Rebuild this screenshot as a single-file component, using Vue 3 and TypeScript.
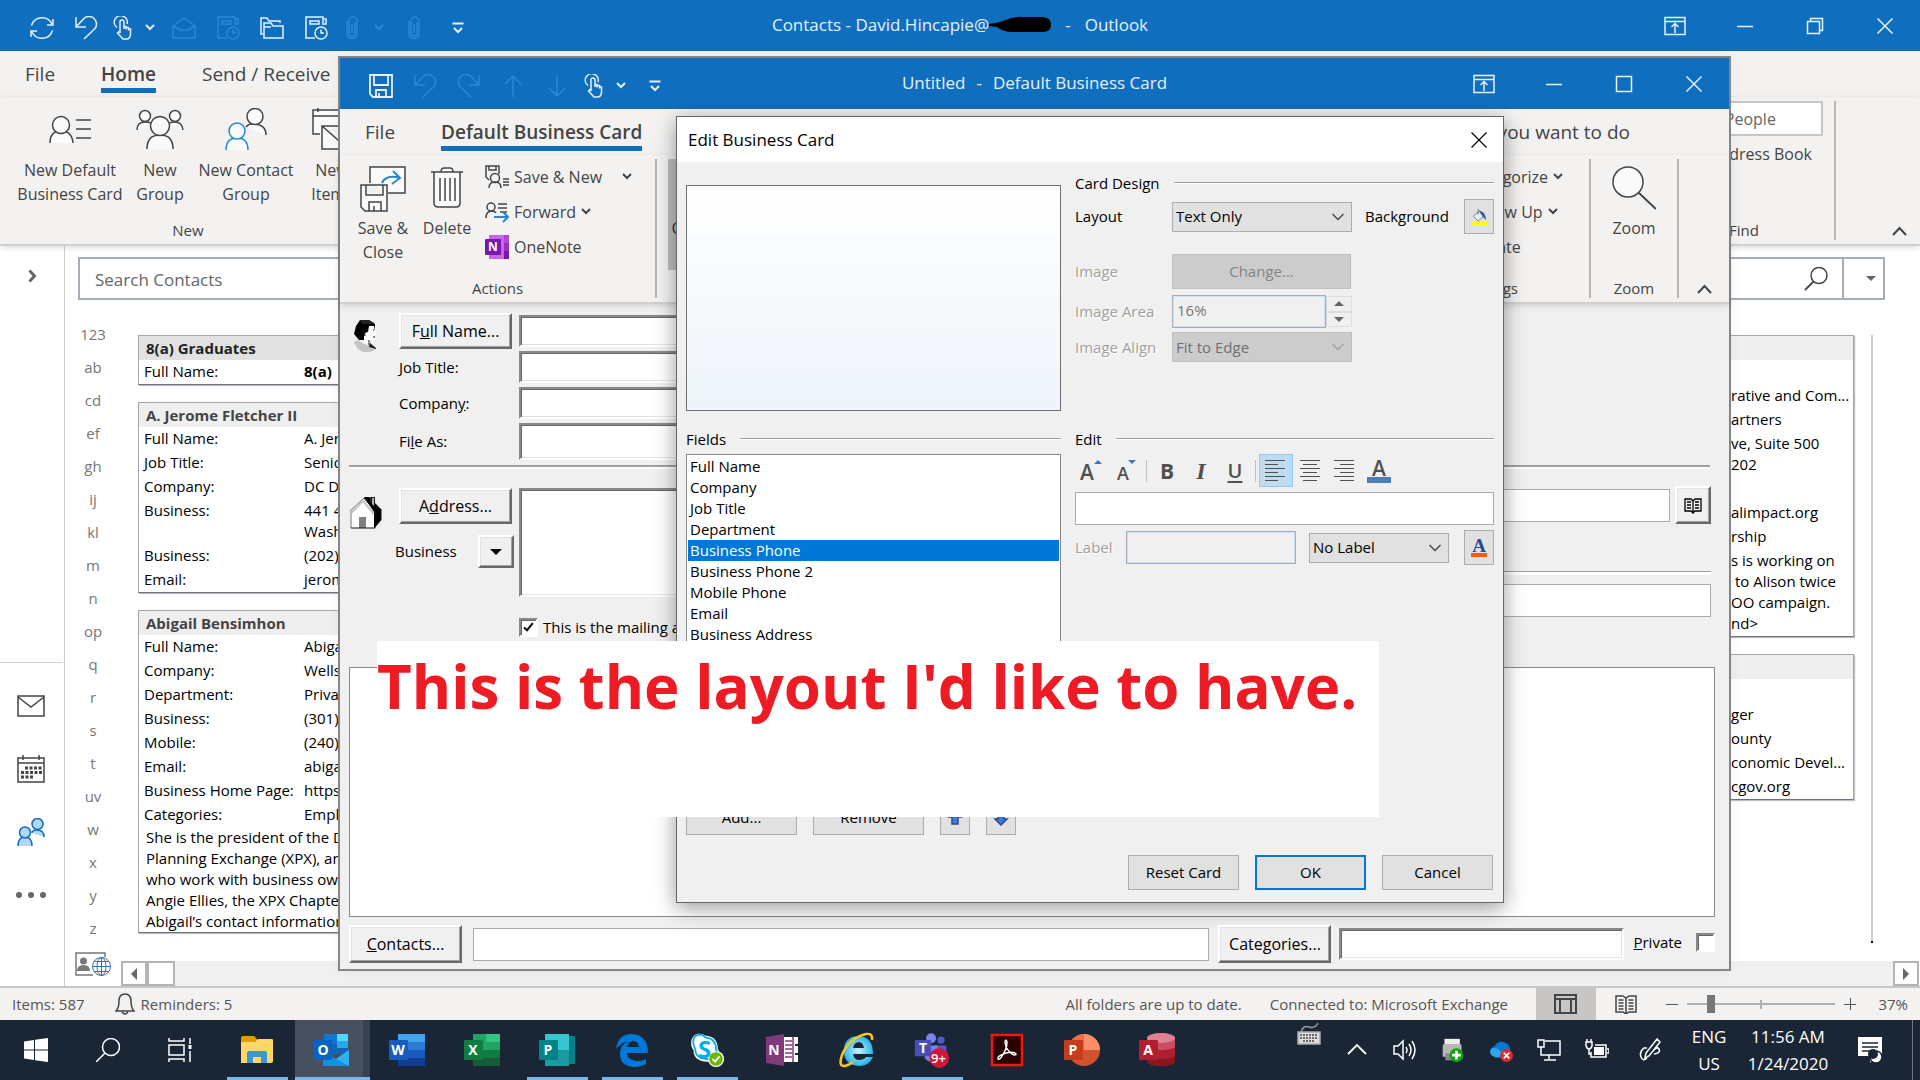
<script setup lang="ts">
import { ref } from 'vue'

interface BarItem { icon: string; label: string; width: number; dim?: boolean }
interface CardRow { label: string; value: string[]; strong?: boolean }
interface Card { name: string; dark?: boolean; rows: CardRow[]; notes?: string[] }
interface TaskApp { icon: string; label: string; letter?: string; badge?: string; open?: boolean; active?: boolean }

const mainQuick: BarItem[] = [
  { icon: 'sync', label: 'Send/Receive All Folders', width: 44 },
  { icon: 'undo', label: 'Undo', width: 44 },
  { icon: 'touch', label: 'Touch mode', width: 30 },
  { icon: 'chev', label: 'Touch options', width: 24 },
  { icon: 'envelope', label: 'Mark read', width: 44, dim: true },
  { icon: 'journal', label: 'Schedule', width: 44, dim: true },
  { icon: 'folders', label: 'Move', width: 44 },
  { icon: 'journal', label: 'Journal', width: 44 },
  { icon: 'clip', label: 'Attach', width: 28, dim: true },
  { icon: 'chev', label: 'Attach options', width: 26, dim: true },
  { icon: 'clip', label: 'Attach file', width: 44, dim: true },
  { icon: 'customize', label: 'Customize toolbar', width: 44 },
]
const cardQuick: BarItem[] = [
  { icon: 'floppy', label: 'Save', width: 44 },
  { icon: 'undo', label: 'Undo', width: 44, dim: true },
  { icon: 'redo', label: 'Redo', width: 44, dim: true },
  { icon: 'up', label: 'Previous item', width: 44, dim: true },
  { icon: 'down', label: 'Next item', width: 44, dim: true },
  { icon: 'touch', label: 'Touch mode', width: 30 },
  { icon: 'chev', label: 'Touch options', width: 24 },
  { icon: 'customize', label: 'Customize toolbar', width: 44 },
]
const mainControls = ['display', 'minimize', 'restore', 'close']
const cardControls = ['display', 'minimize', 'maximize', 'close']

const letters = ['123', 'ab', 'cd', 'ef', 'gh', 'ij', 'kl', 'm', 'n', 'op', 'q', 'r', 's', 't', 'uv', 'w', 'x', 'y', 'z']

const leftCards: Card[] = [
  { name: '8(a) Graduates', dark: true, rows: [{ label: 'Full Name:', value: ['8(a)'], strong: true }] },
  {
    name: 'A. Jerome Fletcher II',
    rows: [
      { label: 'Full Name:', value: ['A. Jer'] },
      { label: 'Job Title:', value: ['Senior'] },
      { label: 'Company:', value: ['DC De'] },
      { label: 'Business:', value: ['441 4', 'Wash'] },
      { label: 'Business:', value: ['(202)'] },
      { label: 'Email:', value: ['jerom'] },
    ],
  },
  {
    name: 'Abigail Bensimhon',
    rows: [
      { label: 'Full Name:', value: ['Abiga'] },
      { label: 'Company:', value: ['Wells'] },
      { label: 'Department:', value: ['Privat'] },
      { label: 'Business:', value: ['(301)'] },
      { label: 'Mobile:', value: ['(240)'] },
      { label: 'Email:', value: ['abiga'] },
      { label: 'Business Home Page:', value: ['https'] },
      { label: 'Categories:', value: ['Empl'] },
    ],
    notes: [
      'She is the president of the D',
      'Planning Exchange (XPX), an',
      'who work with business own',
      'Angie Ellies, the XPX Chapte',
      'Abigail’s contact information',
    ],
  },
]
const rightCards: Card[] = [
  {
    name: '',
    rows: [
      { label: '', value: [''] },
      { label: '', value: ['rative and Com...'] },
      { label: '', value: ['artners'] },
      { label: '', value: ['ve, Suite 500', '202'] },
      { label: '', value: [''] },
      { label: '', value: ['alimpact.org'] },
      { label: '', value: ['rship'] },
      { label: '', value: ['s is working on', ' to Alison twice', 'OO campaign.', 'nd>'] },
    ],
  },
  {
    name: '',
    rows: [
      { label: '', value: [''] },
      { label: '', value: ['ger'] },
      { label: '', value: ['ounty'] },
      { label: '', value: ['conomic Devel...'] },
      { label: '', value: ['cgov.org'] },
    ],
  },
]

const fields = ['Full Name', 'Company', 'Job Title', 'Department', 'Business Phone', 'Business Phone 2', 'Mobile Phone', 'Email', 'Business Address']
const selectedField = ref('Business Phone')
const zoomLevel = ref(14)
const mailing = ref(true)
const area = ref('16%')

const apps: TaskApp[] = [
  { icon: 'explorer', label: 'File Explorer', open: true },
  { icon: 'outlook', label: 'Outlook', letter: 'O', active: true },
  { icon: 'word', label: 'Word', letter: 'W' },
  { icon: 'excel', label: 'Excel', letter: 'X' },
  { icon: 'publisher', label: 'Publisher', letter: 'P', open: true },
  { icon: 'edge', label: 'Edge', open: true },
  { icon: 'skype', label: 'Skype', letter: 'S', open: true },
  { icon: 'onenote16', label: 'OneNote 2016', letter: 'N' },
  { icon: 'ie', label: 'Internet Explorer' },
  { icon: 'teams', label: 'Teams', letter: 'T', badge: '9+', open: true },
  { icon: 'acrobat', label: 'Acrobat' },
  { icon: 'powerpoint', label: 'PowerPoint', letter: 'P' },
  { icon: 'access', label: 'Access', letter: 'A' },
]
const tray = ['caret', 'volume', 'printer', 'onedrive', 'network', 'battery']
</script>

<template>
  <div class="desktop">
    <svg class="sprite" aria-hidden="true">
      <defs>
        <pattern id="dither" width="2" height="2" patternUnits="userSpaceOnUse">
          <rect width="2" height="2" fill="#222" /><rect width="1" height="1" fill="#b0b0b0" />
        </pattern>
        <radialGradient id="ie-fill"><stop offset="0" stop-color="#c8f4ff" /><stop offset="1" stop-color="#2db4ea" /></radialGradient>
      </defs>
      <symbol id="sync" viewBox="0 0 24 24"><path d="M1.500 9.500A11 11 0 0 1 22 8M23 3v6h-6M22.500 14.500A11 11 0 0 1 2 16M1 21v-6h6" /></symbol>
      <symbol id="undo" viewBox="0 0 24 24"><path d="M2 1v10h10M2 11L9 3.500a7.500 7.500 0 0 1 12 9L10 23" /></symbol>
      <symbol id="redo" viewBox="0 0 24 24"><path d="M22 1v10H12M22 11L15 3.500a7.500 7.500 0 0 0-12 9L14 23" /></symbol>
      <symbol id="touch" viewBox="0 0 24 24"><path d="M6 11.500A6.500 6.500 0 1 1 16 8M9 16V6a2 2 0 0 1 4 0v7M13 10.500h2v3M15.500 11.500h2v3M18 13h1.500v6q-1 4-3.500 4h-4L6.500 17l1.500-1.500 1.500 1.500" /></symbol>
      <symbol id="chev" viewBox="0 0 24 24"><path d="M8 9l4 4 4-4" stroke-width="2" /></symbol>
      <symbol id="chev-wide" viewBox="0 0 24 24"><path d="M6.500 9l5.500 5.500L17.500 9" stroke-width="1.300" /></symbol>
      <symbol id="envelope" viewBox="0 0 24 24"><path d="M1 10L12 2l11 8v12H1zM1 10l7 4h8l7-4" /></symbol>
      <symbol id="journal" viewBox="0 0 24 24"><path d="M11 22H2V1h17v8M6 5h9v3H6zM20 3h2v5h-2" /><circle cx="17" cy="17" r="6" /><path d="M17 13.500V17h3" /></symbol>
      <symbol id="folders" viewBox="0 0 24 24"><path d="M3 18H1V2h6l2 3h11v2M4 22V7h7l2 3h10v12zM4 11h7" /></symbol>
      <symbol id="clip" viewBox="0 0 24 24"><path d="M15 6v11a3 3 0 0 1-6 0V5a4 4 0 0 1 8 0v13M12 8v9M7 5v12a5 5 0 0 0 10 1V8" /></symbol>
      <symbol id="customize" viewBox="0 0 24 24"><path d="M6.500 7.500h11M8 12l4 4 4-4" stroke-width="2" /></symbol>
      <symbol id="floppy" viewBox="0 0 24 24"><path d="M1 1h22v22H4l-3-3zM5 1v10h14V1M7 23v-7h10v7M10 19v4" stroke-width="1.800" /></symbol>
      <symbol id="up" viewBox="0 0 24 24"><path d="M12 23V2M4 10l8-8 8 8" /></symbol>
      <symbol id="down" viewBox="0 0 24 24"><path d="M12 1v21M4 14l8 8 8-8" /></symbol>
      <symbol id="display" viewBox="0 0 24 24"><path d="M2 3.500h20v17H2zM2 7.500h20M12 19v-9M8.500 13L12 9.500l3.500 3.500" /></symbol>
      <symbol id="minimize" viewBox="0 0 24 24"><path d="M4 12.500h16" /></symbol>
      <symbol id="maximize" viewBox="0 0 24 24"><path d="M4.500 4.500h15v15h-15z" /></symbol>
      <symbol id="restore" viewBox="0 0 24 24"><path d="M4.500 7.500h12v12h-12zM7.500 7V4.500h12v12H17" /></symbol>
      <symbol id="close" viewBox="0 0 24 24"><path d="M4.500 4.500l15 15M19.500 4.500l-15 15" /></symbol>

      <symbol id="newcard" viewBox="0 0 44 44"><g fill="#fafafa"><path d="M2 35q0-12 11-12t12 12" /><circle cx="13" cy="17" r="8.500" /></g><path d="M28 12h15M28 21h15M28 30h15" /></symbol>
      <symbol id="newgroup" viewBox="0 0 48 44"><g fill="#fafafa"><path d="M1 22q0-8 8-8t8 5M31 19q1-5 8-5t8 8" /><circle cx="9" cy="8" r="5.500" /><circle cx="39" cy="8" r="5.500" /><path d="M11 41q0-14 13-14t13 14" /><circle cx="24" cy="18" r="9.500" /></g></symbol>
      <symbol id="newcontact" viewBox="0 0 44 44"><g fill="#fafafa"><path d="M22 19q3-4 9-3 11 1 11 11" /><circle cx="31" cy="8.500" r="8" /><g stroke="#2488d0"><path d="M2 42q0-12 11-12t11 12" /><circle cx="13" cy="23" r="8" /></g></g></symbol>
      <symbol id="newitems" viewBox="0 0 44 44"><path d="M10 26H3V2h36v10M3 8h36M8 0v4M30 0v4M12 18h31v23H12zM12 18l16 14 15-14" fill="#fafafa" /></symbol>
      <symbol id="saveclose" viewBox="0 0 46 46"><path d="M10 17V1h35v26H28" fill="#fafafa" /><path d="M22 17q4-9 18-5M33 5l7 7-8 6" stroke="#2488d0" stroke-width="2" /><path d="M1 19h26v26H5l-4-4zM6 19v10h17V19M9 45v-9h12v9M14 40v5" fill="#fafafa" /></symbol>
      <symbol id="trash" viewBox="0 0 44 44"><path d="M6 6h32M16 6q0-4 3-4h6q3 0 3 4M9 6v31q0 4 4 4h18q4 0 4-4V6" fill="#fafafa" /><path d="M15 12v23M20 12v23M25 12v23M30 12v23" /></symbol>
      <symbol id="savenew" viewBox="0 0 24 24"><path d="M4 15L1 12V1h13v8M4 1v4h7V1M4 23q0-6 6-6t6 6M18 14h6M18 17h6M18 20h6" /><circle cx="10" cy="13" r="4.500" /></symbol>
      <symbol id="forward" viewBox="0 0 24 24"><path d="M1 18q0-7 6-7 3 0 4 2M13 4h9M13 8h9M15 12h7" /><circle cx="6" cy="7" r="4" /><path d="M9 17h14M18 12l5 5-5 5" stroke="#2488d0" stroke-width="2" /></symbol>
      <symbol id="onenote" viewBox="0 0 24 24"><g stroke="none"><path d="M4 0h15v24H4z" fill="#ca64ea" /><path d="M19 0h5v8h-5z" fill="#ae4bd5" /><path d="M19 8h5v8h-5z" fill="#9332bf" /><path d="M19 16h5v8h-5z" fill="#7719aa" /><rect y="4" width="16" height="16" rx="1" fill="#7719aa" /></g></symbol>
      <symbol id="magnifier" viewBox="0 0 44 44"><circle cx="16" cy="16" r="15" fill="#fafafa" /><path d="M27 27l17 16" stroke-width="2" /></symbol>
      <symbol id="collapse" viewBox="0 0 24 24"><path d="M6 19l6.500-7 6.500 7" stroke-width="2" /></symbol>
      <symbol id="find" viewBox="0 0 24 24"><circle cx="15" cy="8.500" r="8" /><path d="M9.500 14.500L1 23" stroke-width="1.800" /></symbol>
      <symbol id="expand" viewBox="0 0 24 24"><path d="M9.500 6.500l5 5.500-5 5.500" stroke-width="3" /></symbol>

      <symbol id="nav-mail" viewBox="0 0 28 28"><path d="M1 4h26v20H1zM1 5l13 10L27 5" /></symbol>
      <symbol id="nav-calendar" viewBox="0 0 28 28"><path d="M1 3h26v24H1zM1 8h26M6 0v5M22 0v5" /><path d="M8 13h17M4 17.500h21M4 22h13" stroke-width="3" stroke-dasharray="3 1.500" /></symbol>
      <symbol id="nav-people" viewBox="0 0 28 28"><g stroke="#106ebe" fill="#b3d6f2"><path d="M15 15q0-3 5-3 7 0 7 7" /><circle cx="20.500" cy="6" r="5.500" /><path d="M1 28q0-9 7-9t7 9" /><circle cx="8" cy="14.500" r="5.500" /></g></symbol>
      <symbol id="globe-card" viewBox="0 0 36 24"><path d="M18 23H1V1h29v4" stroke="#777" /><circle cx="8.500" cy="9" r="3.500" fill="#777" stroke="none" /><path d="M2 19q0-6 6.500-6t6.500 6z" fill="#777" stroke="none" /><g stroke="#2f75b5" stroke-width="1"><circle cx="26.500" cy="14.500" r="9" fill="#fff" /><ellipse cx="26.500" cy="14.500" rx="4.500" ry="9" /><path d="M26.500 5v19M17.500 14.500h18M19 9.500h15M19 19.500h15" /></g></symbol>
      <symbol id="bell" viewBox="0 0 20 22"><path d="M1 18q3-3 3-10 0-7 6-7t6 7q0 7 3 10zM7 19q3 4 6 0" /></symbol>
      <symbol id="view-normal" viewBox="0 0 24 20"><path d="M1 1h21v18H1zM1 5h21M6 5v14M17 5v14" stroke-width="2" /></symbol>
      <symbol id="view-read" viewBox="0 0 24 20"><path d="M2 2h7l3 2 3-2h7v16h-7l-3 2-3-2H2zM12 4v15M4.500 6h5M4.500 9h5M4.500 12h5M4.500 15h5M14.500 6h5M14.500 9h5M14.500 12h5M14.500 15h5" /></symbol>

      <symbol id="woman" viewBox="0 0 24 34"><g stroke="none"><path d="M1 24l4-2 6 4 10 2 1 4-5 2h-7q-7-3-9-10z" fill="#c4c4c4" /><path d="M3 8l4-6h9l6 4v7l-6 9H6L1 16z" fill="url(#dither)" /><path d="M7 2h9l5 3-4 1H9z" fill="#222" /><path d="M11 26v-7l1-4 3-1 1-6h5l1 5 2 3-2 1v4l-1 2h-4v4z" fill="#fff" /><path d="M17 25l6 5v1l-7-2z" fill="#222" /></g><path d="M20 12h1M20 19h2M16 22v5M9 15q3-3 3 3" stroke="#111" stroke-width="1" /></symbol>
      <symbol id="house" viewBox="0 0 33 34"><g stroke="none"><path d="M15 2h5l12 12v11l-7 8V17z" fill="url(#dither)" /><path d="M21 2h5v9l-5-4z" fill="#222" /><path d="M23 3h2v8l-2-2z" fill="#aaa" /><path d="M2 17L14 5l11 13v15H2z" fill="#fff" /><rect x="10" y="22" width="7" height="11" fill="#808080" /></g><path d="M1 16L15 3M2 16v17" stroke="#777" stroke-width="1" /><path d="M2 18L14 6l11 13" stroke="#c4c4c4" stroke-width="2" /><path d="M15 3l11 13v17H2M26 32l6-7V14" stroke="#111" stroke-width="1" /></symbol>
      <symbol id="book" viewBox="0 0 20 20"><path d="M2 4h6l2 2 2-2h6v12h-6l-2 2-2-2H2zM10 6v12M4 7h4M4 10h4M4 13h4M12 7h4M12 10h4M12 13h4" stroke="#000" stroke-width="1.300" /></symbol>
      <symbol id="bucket" viewBox="0 0 20 20"><g stroke="none"><path d="M3 9l7-6 6 6-7 6z" fill="#e8f2fb" /><path d="M10 2q8 1 9 12l-5-5z" fill="#2b5ca8" /><rect x="0" y="15" width="20" height="5" fill="#ff0" /></g><path d="M3 9l7-6 6 6-7 6zM9 0v7" stroke="#567" stroke-width="1" /></symbol>
      <symbol id="arrow-up" viewBox="0 0 16 16"><path d="M8 1l6 6h-3v7H5V7H2z" fill="#4a78d8" stroke="#2848a0" /></symbol>
      <symbol id="arrow-down" viewBox="0 0 16 16"><path d="M8 15l6-6h-3V2H5v7H2z" fill="#4a78d8" stroke="#2848a0" /></symbol>
      <symbol id="al-left" viewBox="0 0 24 24"><path d="M1 1.500h20M1 5.500h13M1 9.500h20M1 13.500h13M1 17.500h20M1 21.500h13" stroke-width="1" /></symbol>
      <symbol id="al-center" viewBox="0 0 24 24"><path d="M2 1.500h20M5 5.500h14M2 9.500h20M5 13.500h14M2 17.500h20M5 21.500h14" stroke-width="1" /></symbol>
      <symbol id="al-right" viewBox="0 0 24 24"><path d="M2 1.500h20M8 5.500h14M2 9.500h20M8 13.500h14M2 17.500h20M8 21.500h14" stroke-width="1" /></symbol>

      <symbol id="windows" viewBox="0 0 24 24"><path d="M0 3.500l10-1.500v9.500H0zM11 1.800L24 0v11.500H11zM0 12.500h10V22L0 20.500zM11 12.500h13V24l-13-1.800z" fill="#fff" stroke="none" /></symbol>
      <symbol id="search" viewBox="0 0 24 24"><circle cx="15" cy="9" r="8.500" /><path d="M9 15L0 24" /></symbol>
      <symbol id="taskview" viewBox="0 0 24 24"><path d="M1 0v3h15V0M1 24v-3h15v3M1 7h15v10H1zM22 0v6M22 13v11" /><path d="M22 7v4" stroke-width="3" /></symbol>
      <symbol id="explorer" viewBox="0 0 36 36"><g stroke="none"><path d="M2 6q0-2 2-2h11l3 3v5H2z" fill="#e09c0c" /><path d="M2 10h14l3-3h14q1 0 1 1v21q0 2-2 2H2z" fill="#ffd766" /><path d="M8 31V21q0-2 2-2h16q2 0 2 2v10h-6v-6h-8v6z" fill="#3b97dc" /></g></symbol>
      <symbol id="outlook" viewBox="0 0 36 36"><g stroke="none"><path d="M10 2h24v20H10z" fill="#1066b5" /><path d="M10 2h13v10H10z" fill="#0f78d4" /><path d="M23 2h11v7H23z" fill="#50d9ff" /><path d="M23 9h11v7H23z" fill="#28a8ea" /><path d="M9 20l13 7 13-9v15q0 1-1 1H9z" fill="#1490df" /><path d="M35 18v16L22 27z" fill="#32b0f0" /><rect x="0" y="8" width="18" height="20" rx="1" fill="#0a63c2" /></g></symbol>
      <symbol id="word" viewBox="0 0 36 36"><g stroke="none"><path d="M9 2h27v8H9z" fill="#41a5ee" /><path d="M9 10h27v8H9z" fill="#2b7cd3" /><path d="M9 18h27v8H9z" fill="#185abd" /><path d="M9 26h27v8H9z" fill="#103f91" /><rect y="8" width="19" height="20" rx="1" fill="#185abd" /></g></symbol>
      <symbol id="excel" viewBox="0 0 36 36"><g stroke="none"><path d="M9 2h27v32H9z" fill="#21a366" /><path d="M22 2h14v8H22z" fill="#33c481" /><path d="M9 18h27v8H9z" fill="#107c41" /><path d="M9 26h27v8H9z" fill="#185c37" /><rect y="8" width="19" height="20" rx="1" fill="#107c41" /></g></symbol>
      <symbol id="publisher" viewBox="0 0 36 36"><g stroke="none"><path d="M20 4h16v28H20z" fill="#038387" /><path d="M6 2h24v32H6z" fill="#37c6d0" /><path d="M6 18h24v16H6z" fill="#1a9ba1" /><rect y="8" width="19" height="20" rx="1" fill="#038387" /></g></symbol>
      <symbol id="edge" viewBox="0 0 36 36"><path d="M2 17Q4 2 18 2q16 1 16 19H13q1 8 11 8 5 0 8-2v5q-5 3-12 3Q5 34 6 20q1-8 9-11-7 1-13 8zM13 15h12q-1-6-6-6-5 1-6 6z" fill="#0078d7" stroke="none" fill-rule="evenodd" /></symbol>
      <symbol id="skype" viewBox="0 0 40 40"><g stroke="none"><path d="M11 2q5 0 7 2 14 1 14 15 3 4 1 9-4 7-12 5Q5 33 5 20 1 15 3 8q3-6 8-6z" fill="#fff" /><path d="M12 4q4 0 6 3 12 1 12 13 2 4 0 7-3 4-9 3Q7 30 7 19 4 14 5 9q3-5 7-5z" fill="#fff" /><circle cx="30" cy="30" r="9" fill="#fff" /><circle cx="30" cy="30" r="8" fill="#6bb700" /></g><path d="M12 3q4 0 6 3 12 1 12 13 2 4 0 8-4 4-9 3Q7 30 7 19 4 14 5 8q2-5 7-5z" stroke="#00aff0" stroke-width="2" /><circle cx="30" cy="30" r="8" fill="#6bb700" stroke="#fff" stroke-width="1" /><path d="M26 30l3 3 5-6" stroke="#fff" stroke-width="2" /></symbol>
      <symbol id="onenote16" viewBox="0 0 36 36"><g stroke="none"><path d="M18 5h13v25H18z" fill="#fff" /><path d="M31 5h3v7h-3zM31 14h3v7h-3zM31 23h3v7h-3z" fill="#fff" /><path d="M2 5L20 2v32L2 31z" fill="#80397b" /></g><path d="M21 9h7M21 13h7M21 17h7M21 21h7M21 25h7M29 5v25" stroke="#80397b" /></symbol>
      <symbol id="ie" viewBox="0 0 36 36"><path d="M5 21Q4 4 20 4q14 1 14 18H14q1 6 6 6 5 0 7-3h7q-4 9-14 9Q6 33 5 21zM14 16h11q-1-6-5-6-5 0-6 6z" fill="url(#ie-fill)" stroke="none" fill-rule="evenodd" /><path d="M33 8q1-7-6-6Q10 6 3 23q-4 12 3 11 4-1 8-4" stroke="#f4c620" stroke-width="2.500" /></symbol>
      <symbol id="teams" viewBox="0 0 40 40"><g stroke="none"><circle cx="19" cy="7" r="5.500" fill="#7b83eb" /><circle cx="30" cy="9" r="4" fill="#5059c9" /><path d="M23 15h13v12q-6 6-13 3z" fill="#5059c9" /><path d="M11 15h15v16q-8 6-14-2z" fill="#7b83eb" /><rect x="1" y="9" width="18" height="18" rx="1" fill="#464eb8" /><circle cx="28" cy="29" r="11" fill="#d0163b" /></g></symbol>
      <symbol id="acrobat" viewBox="0 0 36 36"><rect x="3" y="3" width="30" height="30" fill="#2a0000" stroke="#f5150a" stroke-width="2.500" /><path d="M9 27q-1-3 8-6 8-2 10 1 0 2-4 0-6-4-7-12 1-4 2 0 0 7-5 14-2 4-4 3z" stroke="#fff" /></symbol>
      <symbol id="powerpoint" viewBox="0 0 36 36"><g stroke="none"><circle cx="20" cy="18" r="16" fill="#d35230" /><path d="M20 2a16 16 0 0 1 16 16H20z" fill="#ff8f6b" /><path d="M20 2A16 16 0 0 0 4 18h16z" fill="#ed6c47" /><rect y="8" width="19" height="20" rx="1" fill="#c43e1c" /></g></symbol>
      <symbol id="access" viewBox="0 0 36 36"><g stroke="none"><path d="M8 6v24q3 4 14 4t14-4V6z" fill="#ae2031" /><path d="M8 6v9q3 3 14 3t14-3V6z" fill="#c94f60" /><path d="M8 24v6q3 4 14 4t14-4v-6q-3 3-14 3T8 24z" fill="#8a1522" /><ellipse cx="22" cy="6" rx="14" ry="5" fill="#e08095" /><rect y="8" width="19" height="20" rx="1" fill="#b01e30" /></g></symbol>

      <symbol id="keyboard" viewBox="0 0 24 24"><path d="M4 9q2-7 8-5t9-4" stroke="#999" /><rect x="1" y="9" width="22" height="12" fill="#ddd" stroke="#aaa" /><path d="M3 12h18M3 15h18M6 18h12" stroke="#444" stroke-dasharray="2 1" /></symbol>
      <symbol id="caret" viewBox="0 0 24 24"><path d="M3 16l9-9 9 9" stroke-width="1.800" /></symbol>
      <symbol id="volume" viewBox="0 0 24 24"><path d="M1 8h4l5-5v18l-5-5H1zM13 9q2 3 0 6M16 6q4 6 0 12M19 3q6 9 0 18" /></symbol>
      <symbol id="printer" viewBox="0 0 26 28"><g stroke="none"><rect x="3" y="1" width="18" height="10" fill="#eee" /><path d="M1 9q0-2 2-2h18q2 0 2 2v13H1z" fill="#b8b8b8" /><rect x="4" y="18" width="14" height="8" fill="#888" /><circle cx="17" cy="20" r="8" fill="#16a016" /></g><path d="M17 15v10M12 20h10" stroke="#fff" stroke-width="3" /></symbol>
      <symbol id="onedrive" viewBox="0 0 26 26"><g stroke="none"><path d="M4 18q-5-6 2-9 4-7 11-4 6 2 6 9-1 6-6 6H7z" fill="#0078d4" /><path d="M3 19q-3-3-1-7 5-3 9 1l8 8H7z" fill="#28a8ea" /><circle cx="19" cy="19" r="7" fill="#d92c2c" /></g><path d="M16 16l6 6M22 16l-6 6" stroke="#fff" stroke-width="1.800" /></symbol>
      <symbol id="network" viewBox="0 0 24 24"><path d="M8 3h15v14H4v-6M12 17v4M7 22h12M1 2h6v7H1zM4 9v3" /></symbol>
      <symbol id="battery" viewBox="0 0 24 24"><path d="M6 14v5h15V7H10M22 11h2v4h-2M1 4h6v4q-1 3-3 3T1 8zM2 1v3M6 1v3M4 11v5h2" /><rect x="9" y="9" width="10" height="8" fill="#fff" stroke="none" /></symbol>
      <symbol id="pen" viewBox="0 0 24 24"><path d="M18 1l3 3-11 14-4 2 1-5zM8 10H5q-5 4-3 9 2 5 6 1M14 13q4-5 6-2 2 4-5 5" /></symbol>
      <symbol id="action" viewBox="0 0 26 28"><path d="M1 1h24v19h-8l-4 7v-7H1z" fill="#fff" stroke="none" /><path d="M5 7h16M5 11h16M5 15h12" stroke="#1a2636" stroke-width="1.500" /><circle cx="19" cy="21" r="6" fill="#fff" stroke="#1a2636" /><circle cx="16" cy="18" r="5" fill="#1a2636" stroke="none" /></symbol>
    </svg>

    <section class="main-window" aria-label="Outlook contacts">
      <header class="titlebar">
        <div class="quick">
          <button v-for="(b, i) in mainQuick" :key="i" :aria-label="b.label" :class="{ dim: b.dim }" :style="{ width: b.width + 'px' }">
            <svg class="i24"><use :href="'#' + b.icon" /></svg>
          </button>
        </div>
        <h1 class="title">Contacts - David.Hincapie@<svg class="scribble" viewBox="0 0 62 17"><path d="M0 8Q8 7 14 5 24 0 34 1H54q8 1 8 7 0 8-8 8H24Q14 16 8 11L0 10z" fill="#000" stroke="none" /></svg><span>-</span><span>Outlook</span></h1>
        <div class="controls">
          <button v-for="c in mainControls" :key="c" :aria-label="c"><svg class="i24"><use :href="'#' + c" /></svg></button>
        </div>
      </header>
      <nav class="tabs">
        <button>File</button><button class="on">Home</button><button>Send / Receive</button>
      </nav>
      <div class="ribbon">
        <div class="group new-group">
          <div class="tools">
            <button class="big w124"><svg class="i44"><use href="#newcard" /></svg>New Default<br />Business Card</button>
            <button class="big w56"><svg class="i44 wide"><use href="#newgroup" /></svg>New<br />Group</button>
            <button class="big w116"><svg class="i44"><use href="#newcontact" /></svg>New Contact<br />Group</button>
            <button class="big w56"><svg class="i44"><use href="#newitems" /></svg>New<br />Items</button>
          </div>
          <span class="caption">New</span>
        </div>
        <div class="group find-group">
          <div class="find-tools">
            <input class="people" aria-label="Search People" value="Search People" />
            <button>Address Book</button>
          </div>
          <span class="caption">Find</span>
        </div>
        <button class="fold" aria-label="Collapse ribbon"><svg class="i24"><use href="#collapse" /></svg></button>
      </div>

      <div class="workspace">
        <nav class="rail">
          <button class="expand" aria-label="Expand folder pane"><svg class="i24"><use href="#expand" /></svg></button>
          <div class="modules">
            <button aria-label="Mail"><svg class="i28"><use href="#nav-mail" /></svg></button>
            <button aria-label="Calendar"><svg class="i28"><use href="#nav-calendar" /></svg></button>
            <button aria-label="People"><svg class="i28"><use href="#nav-people" /></svg></button>
            <button aria-label="More"><i class="dot"></i><i class="dot"></i><i class="dot"></i></button>
          </div>
        </nav>
        <main class="people-view">
          <div class="search">
            <input aria-label="Search Contacts" placeholder="Search Contacts" />
            <button class="go" aria-label="Search"><svg class="i24"><use href="#find" /></svg></button>
            <button class="drop" aria-label="Search scope"><i class="tri-down"></i></button>
          </div>
          <div class="book">
            <nav class="letters">
              <button v-for="l in letters" :key="l">{{ l }}</button>
              <button class="globe" aria-label="Address card options"><svg><use href="#globe-card" /></svg></button>
            </nav>
            <div class="cards-area">
              <div class="cards">
                <div v-for="(col, ci) in [leftCards, rightCards]" :key="ci" class="card-col" :class="{ far: ci === 1 }">
                  <article v-for="(card, i) in col" :key="i" class="card">
                    <h2 :class="{ dark: card.dark }">{{ card.name }}</h2>
                    <dl>
                      <div v-for="(row, r) in card.rows" :key="r">
                        <dt>{{ row.label }}</dt>
                        <dd :class="{ strong: row.strong }"><span v-for="(line, n) in row.value" :key="n">{{ line }}</span></dd>
                      </div>
                    </dl>
                    <p v-for="n in card.notes" :key="n">{{ n }}</p>
                  </article>
                </div>
                <div class="col-line"></div>
              </div>
              <div class="hscroll">
                <button aria-label="Scroll left"><i class="tri-left"></i></button><span class="thumb"></span>
                <button class="end" aria-label="Scroll right"><i class="tri-right"></i></button>
              </div>
            </div>
          </div>
        </main>
      </div>

      <footer class="status">
        <span>Items: 587</span>
        <svg class="bell"><use href="#bell" /></svg><span class="grow">Reminders: 5</span>
        <span>All folders are up to date.</span>
        <span class="conn">Connected to: Microsoft Exchange</span>
        <button class="view on" aria-label="Normal view"><svg><use href="#view-normal" /></svg></button>
        <button class="view" aria-label="Reading view"><svg><use href="#view-read" /></svg></button>
        <button class="minus" aria-label="Zoom out"></button>
        <input v-model="zoomLevel" class="zoom" type="range" min="0" max="100" aria-label="Zoom" />
        <button class="plus" aria-label="Zoom in"></button>
        <span class="percent">37%</span>
      </footer>
    </section>

    <section class="card-window" aria-label="Default Business Card">
      <header class="titlebar">
        <div class="quick">
          <button v-for="(b, i) in cardQuick" :key="i" :aria-label="b.label" :class="{ dim: b.dim }" :style="{ width: b.width + 'px' }">
            <svg class="i24"><use :href="'#' + b.icon" /></svg>
          </button>
        </div>
        <h1 class="title">Untitled<span>-</span><span>Default Business Card</span></h1>
        <div class="controls">
          <button v-for="c in cardControls" :key="c" :aria-label="c"><svg class="i24"><use :href="'#' + c" /></svg></button>
        </div>
      </header>
      <nav class="tabs">
        <button>File</button><button class="on">Default Business Card</button>
        <button class="tell">Tell me what you want to do</button>
      </nav>
      <div class="ribbon">
        <div class="group actions">
          <div class="tools">
            <button class="big w60"><svg class="i46"><use href="#saveclose" /></svg>Save &amp;<br />Close</button>
            <button class="big w60"><svg class="i44"><use href="#trash" /></svg>Delete</button>
            <div class="stack">
              <button><svg class="i24"><use href="#savenew" /></svg>Save &amp; New<svg class="i24 far-chev"><use href="#chev" /></svg></button>
              <button><svg class="i24"><use href="#forward" /></svg>Forward<svg class="i24 chevron"><use href="#chev" /></svg></button>
              <button><span class="note-icon"><svg class="i24"><use href="#onenote" /></svg><b>N</b></span>OneNote</button>
            </div>
          </div>
          <span class="caption">Actions</span>
        </div>
        <div class="group show">
          <div class="tools"><button class="big pressed">General</button></div>
        </div>
        <div class="group tags">
          <div class="tools">
            <div class="stack">
              <button>Categorize<svg class="i24 chevron"><use href="#chev" /></svg></button>
              <button>Follow Up<svg class="i24 chevron"><use href="#chev" /></svg></button>
              <button>Private</button>
            </div>
          </div>
          <span class="caption">Tags</span>
        </div>
        <div class="group zoom-group">
          <div class="tools"><button class="big"><svg class="i44"><use href="#magnifier" /></svg>Zoom</button></div>
          <span class="caption">Zoom</span>
        </div>
        <button class="fold" aria-label="Collapse ribbon"><svg class="i24"><use href="#collapse" /></svg></button>
      </div>

      <form class="form" @submit.prevent>
        <div class="names">
          <svg class="woman"><use href="#woman" /></svg>
          <button class="classic" type="button">F<u>u</u>ll Name...</button><input class="sunk" aria-label="Full name" />
          <label for="job"><u>J</u>ob Title:</label><input id="job" class="sunk" />
          <label for="company">Compan<u>y</u>:</label><input id="company" class="sunk" />
          <label for="fileas">Fi<u>l</u>e As:</label><input id="fileas" class="sunk tall" />
        </div>
        <hr class="etched" />
        <div class="details">
          <div class="address">
            <svg class="house"><use href="#house" /></svg>
            <div class="addr-left">
              <button class="classic" type="button">A<u>d</u>dress...</button>
              <div class="kind">Business<button class="classic square" type="button" aria-label="Address type"><i class="tri-black"></i></button></div>
            </div>
            <div class="addr-right">
              <textarea class="sunk" aria-label="Address"></textarea>
              <label class="check"><input v-model="mailing" type="checkbox" />This is the mailing address</label>
            </div>
          </div>
          <div class="web">
            <div class="email"><input class="flat" aria-label="E-mail" /><button class="classic" type="button" aria-label="Address book"><svg><use href="#book" /></svg></button></div>
            <hr class="etched" />
            <input class="flat" aria-label="Web page address" />
          </div>
        </div>
        <textarea class="notes" aria-label="Notes"></textarea>
        <div class="bottom">
          <button class="classic" type="button"><u>C</u>ontacts...</button>
          <input class="flat contacts" aria-label="Contacts" />
          <button class="classic" type="button">Cate<u>g</u>ories...</button>
          <input class="sunk cats" aria-label="Categories" />
          <label class="check private"><span><u>P</u>rivate</span><input type="checkbox" /></label>
        </div>
      </form>
    </section>

    <section class="dialog" role="dialog" aria-label="Edit Business Card">
      <header>
        <h1>Edit Business Card</h1>
        <button aria-label="Close"><svg class="i24"><use href="#close" /></svg></button>
      </header>
      <div class="dialog-body">
        <div class="preview"></div>
        <fieldset class="design">
          <div class="legend">Card Design</div>
          <div class="line r35">
            <label for="layout">Layout</label>
            <span class="select w180"><select id="layout"><option>Text Only</option></select><svg class="i24"><use href="#chev-wide" /></svg></span>
            <span class="bg-label">Background</span>
            <button class="win icon" type="button" aria-label="Background"><svg><use href="#bucket" /></svg></button>
          </div>
          <div class="line r35 image-row"><span class="off">Image</span><button class="win change" disabled>Change...</button></div>
          <div class="line r33"><label class="off" for="area">Image Area</label><input id="area" v-model="area" class="pale" disabled /><span class="spin"><button disabled aria-label="Increase"><i class="tri-up"></i></button><button disabled aria-label="Decrease"><i class="tri-small"></i></button></span></div>
          <div class="line r30"><label class="off" for="align">Image Align</label><span class="select w180 disabled"><select id="align" disabled><option>Fit to Edge</option></select><svg class="i24"><use href="#chev-wide" /></svg></span></div>
        </fieldset>
        <div class="fields">
          <div class="legend">Fields</div>
          <ul class="list" role="listbox">
            <li v-for="f in fields" :key="f" role="option" :class="{ sel: f === selectedField }" @click="selectedField = f">{{ f }}</li>
          </ul>
          <div class="row-buttons">
            <button class="win">Add...</button><button class="win">Remove</button>
            <button class="win icon" aria-label="Move up"><svg><use href="#arrow-up" /></svg></button>
            <button class="win icon" aria-label="Move down"><svg><use href="#arrow-down" /></svg></button>
          </div>
        </div>
        <div class="edit">
          <div class="legend">Edit</div>
          <div class="format">
            <button class="grow-a">A<i class="mark-up"></i></button>
            <button class="shrink-a">A<i class="mark-down"></i></button>
            <i class="sep"></i>
            <button class="b">B</button><button class="it">I</button><button class="un">U</button>
            <i class="sep"></i>
            <button class="active" aria-label="Align left"><svg class="i24"><use href="#al-left" /></svg></button>
            <button aria-label="Center"><svg class="i24"><use href="#al-center" /></svg></button>
            <button aria-label="Align right"><svg class="i24"><use href="#al-right" /></svg></button>
            <button class="color-a">A</button>
          </div>
          <input class="flat value" aria-label="Field value" />
          <div class="line label-row">
            <label class="off" for="lab">Label</label>
            <input id="lab" class="pale" disabled />
            <span class="select nolabel"><select aria-label="Label position"><option>No Label</option></select><svg class="i24"><use href="#chev-wide" /></svg></span>
            <button class="win icon tint" aria-label="Label color"><span>A</span></button>
          </div>
        </div>
      </div>
      <footer>
        <button class="win">Reset Card</button><button class="win ok">OK</button><button class="win">Cancel</button>
      </footer>
    </section>

    <div class="banner">This is the layout I'd like to have.</div>

    <footer class="taskbar">
      <button class="sys" aria-label="Start"><svg class="i24"><use href="#windows" /></svg></button>
      <button class="sys" aria-label="Search"><svg class="i24"><use href="#search" /></svg></button>
      <button class="sys" aria-label="Task view"><svg class="i24"><use href="#taskview" /></svg></button>
      <div class="apps">
        <button v-for="a in apps" :key="a.icon" :aria-label="a.label" :class="{ open: a.open, active: a.active }">
          <span class="app-icon" :class="a.icon"><svg><use :href="'#' + a.icon" /></svg><b v-if="a.letter">{{ a.letter }}</b><em v-if="a.badge">{{ a.badge }}</em></span>
        </button>
      </div>
      <button class="tray kb" aria-label="Keyboard"><svg class="i24"><use href="#keyboard" /></svg></button>
      <button v-for="t in tray" :key="t" class="tray" :aria-label="t"><svg class="i24"><use :href="'#' + t" /></svg></button>
      <button class="tray pen" aria-label="Ink workspace"><svg class="i24"><use href="#pen" /></svg></button>
      <button class="lang">ENG<br />US</button>
      <button class="clock">11:56 AM<br />1/24/2020</button>
      <button class="action" aria-label="Notifications"><svg><use href="#action" /></svg></button>
      <i class="peek"></i>
    </footer>
  </div>
</template>

<style>
html, body { margin: 0; background: #fff; }
</style>

<style scoped>
.desktop { position: relative; min-height: 100vh; display: flex; flex-direction: column; overflow: hidden; font-family: "Open Sans", "Noto Sans", sans-serif; font-size: 15px; line-height: 21px; color: #000; }
.desktop *, .desktop *::before, .desktop *::after { box-sizing: border-box; }
.sprite { position: absolute; width: 0; height: 0; }
svg { display: block; flex: none; fill: none; stroke: currentColor; stroke-width: 1.5; }
.i24 { width: 24px; height: 24px; }
.i28 { width: 28px; height: 28px; }
.i44 { width: 44px; height: 44px; margin-bottom: 6px; }
.i44.wide { width: 48px; }
.i46 { width: 46px; height: 46px; margin-bottom: 4px; }
button { font: inherit; color: inherit; background: none; border: 0; padding: 0; margin: 0; border-radius: 0; }
input, select, textarea { font: inherit; color: inherit; border-radius: 0; outline: 0; margin: 0; min-width: 0; }
h1, h2, p, dl, dd, ul { margin: 0; padding: 0; }
i { display: block; font-style: normal; }

/* window chrome */
.main-window { flex: 1; display: flex; flex-direction: column; min-height: 0; }
.titlebar { height: 51px; flex: none; display: grid; grid-template-columns: 1fr auto 1fr; align-items: center; background: #106ebe; color: #e6f1fb; }
.quick { display: flex; padding-left: 20px; padding-top: 5px; }
.quick button { display: flex; justify-content: center; }
.quick .dim { color: #2b88d8; }
.title { display: flex; align-items: center; font-size: 17px; font-weight: 400; white-space: nowrap; padding-bottom: 2px; }
.title span { margin-left: 11px; }
.scribble { width: 62px; height: 17px; }
.scribble + span, .scribble + span + span { margin-left: 14px; }
.controls { display: flex; justify-content: flex-end; }
.controls button { width: 70px; height: 48px; display: flex; align-items: center; justify-content: center; }
.tabs { display: flex; height: 46px; flex: none; padding: 10px 0 0 25px; gap: 46px; font-size: 19px; line-height: 27px; background: #f3f2f1; color: #444; align-items: flex-start; }
.tabs button { white-space: nowrap; border-bottom: 5px solid transparent; line-height: 27px; }
.tabs .on { font-weight: 600; border-color: #106ebe; }
.ribbon { position: relative; z-index: 1; display: flex; flex: none; height: 149px; padding: 4px 0; background: #f3f2f1; color: #444; border-bottom: 2px solid #d2d0ce; box-shadow: 0 2px 6px rgba(0, 0, 0, .12); font-size: 16px; line-height: 24px; }
.group { display: flex; flex-direction: column; }
.tools { display: flex; height: 119px; align-items: flex-start; }
.caption { text-align: center; font-size: 15px; line-height: 20px; }
.big { display: flex; flex-direction: column; align-items: center; padding-top: 7px; line-height: 24px; white-space: nowrap; text-align: center; }
.w124 { width: 124px; } .w56 { width: 56px; } .w116 { width: 116px; } .w60 { width: 60px; }
.new-group { padding-left: 8px; width: 368px; }
.new-group .big, .actions .big { display: block; }
.new-group .big svg, .actions .big svg { margin-left: auto; margin-right: auto; }
.find-group { margin-left: auto; width: 182px; border-right: 2px solid #b8b6b4; }
.find-tools { height: 119px; padding-right: 11px; display: flex; flex-direction: column; align-items: stretch; }
.people { height: 35px; border: 2px solid #c6c6c6; background: #fff; color: #666; width: 100%; padding: 0 0 0 14px; font-size: 16px; }
.find-tools button { margin-top: 6px; text-align: right; padding-right: 11px; }
.fold { align-self: flex-end; width: 42px; margin-left: 42px; display: flex; justify-content: center; }

/* contacts view */
.workspace { flex: 1; display: flex; min-height: 0; background: #fff; }
.rail { width: 65px; border-right: 1px solid #d0d0d0; display: flex; flex-direction: column; justify-content: space-between; color: #444; }
.rail button { display: flex; align-items: center; justify-content: center; gap: 6px; }
.expand { padding-top: 18px; color: #666; }
.modules { border-top: 1px solid #d0d0d0; padding: 11px 1px 60px 0; width: 63px; }
.modules button { width: 100%; height: 63px; }
.dot { width: 6px; height: 6px; border-radius: 50%; background: #666; }
.people-view { flex: 1; display: flex; flex-direction: column; min-width: 0; }
.search { display: flex; height: 43px; margin: 11px 35px 0 13px; border: 2px solid #a6adb9; }
.search input { flex: 1; border: 0; padding: 2px 0 0 15px; font-size: 17px; background: #fff; }
.search input::placeholder { color: #666; opacity: 1; }
.go { padding: 0 14px; color: #444; }
.drop { width: 41px; border-left: 2px solid #a6adb9; display: flex; align-items: center; justify-content: flex-end; padding-right: 7px; }
.tri-down { border: 5px solid transparent; border-top-color: #666; border-bottom: 0; }
.book { flex: 1; display: flex; min-height: 0; padding-top: 18px; }
.letters { width: 56px; display: flex; flex-direction: column; align-items: center; color: #777; }
.letters button { height: 33px; line-height: 33px; width: 56px; flex: none; }
.letters .globe { height: 24px; margin-top: 7px; padding-left: 10px; }
.globe svg { width: 36px; height: 24px; }
.cards-area { flex: 1; display: flex; flex-direction: column; min-width: 0; }
.cards { flex: 1; min-height: 0; display: flex; justify-content: space-between; padding: 17px 47px 18px 17px; }
.card-col { width: 330px; display: flex; flex-direction: column; gap: 17px; margin-right: auto; }
.card-col.far { margin-right: 17px; }
.card { border: 1px solid #a0a5b0; border-bottom-color: #6b7280; box-shadow: 1px 1px 1px rgba(0, 0, 0, .25); white-space: pre; overflow: hidden; flex: none; }
.card h2 { height: 24px; line-height: 24px; font-size: 15px; font-weight: 700; background: #efefef; padding-left: 7px; color: #444; }
.card h2.dark { background: #e1e1e1; color: #222; }
.card dl > div { display: grid; grid-template-columns: 165px 1fr; padding: 1px 0 2px; min-height: 24px; }
.far .card dl > div { grid-template-columns: 206px 1fr; }
.card dt { padding-left: 5px; }
.card dd span { display: block; height: 21px; }
.card dd.strong { font-weight: 700; }
.card p { padding-left: 7px; height: 21px; }
.col-line { width: 2px; background: #d0d0d0; border-bottom: 2px solid #000; }
.hscroll { height: 25px; background: #f0f0f0; display: flex; margin-right: 1px; }
.hscroll button, .thumb { width: 26px; height: 25px; border: 2px solid #b4b4b4; background: #fff; display: flex; align-items: center; justify-content: center; }
.thumb { width: 28px; }
.hscroll .end { margin-left: auto; }
.tri-left { border: 6px solid transparent; border-right-color: #666; border-left: 0; }
.tri-right { border: 6px solid transparent; border-left-color: #666; border-right: 0; }

.status { height: 34px; flex: none; display: flex; align-items: center; background: #f3f2f1; border-top: 2px solid #c8c6c4; color: #555; padding: 0 12px; }
.bell { width: 20px; height: 22px; margin: 0 6px 0 30px; color: #444; }
.grow { flex: 1; }
.conn { margin: 0 28px; }
.view { width: 60px; height: 32px; display: flex; align-items: center; justify-content: center; color: #444; }
.view svg { width: 24px; height: 20px; }
.view.on { background: #c8c6c4; }
.minus, .plus { width: 12px; height: 12px; background: linear-gradient(#555, #555) center / 12px 1px no-repeat; }
.minus { margin: 0 9px 0 10px; }
.plus { margin: 0 20px 0 9px; background: linear-gradient(#555, #555) center / 12px 1px no-repeat, linear-gradient(#555, #555) center / 1px 12px no-repeat; }
.zoom { appearance: none; width: 148px; height: 18px; background: linear-gradient(#b0b0b0, #b0b0b0) center / 100% 2px no-repeat, linear-gradient(#b0b0b0, #b0b0b0) center / 2px 9px no-repeat; }
.zoom::-webkit-slider-thumb { appearance: none; width: 8px; height: 18px; background: #777; border: 0; }
.percent { width: 32px; text-align: right; }

/* contact window */
.card-window { position: absolute; z-index: 2; left: 338px; right: 189px; top: 56px; bottom: 109px; border: 2px solid #858585; background: #f0f0f0; display: flex; flex-direction: column; box-shadow: 0 0 12px rgba(0, 0, 0, .05); }
.card-window .quick { padding-left: 19px; }
.card-window .tell { margin-left: auto; margin-right: 99px; }
.actions { width: 317px; border-right: 2px solid #b8b6b4; }
.actions .tools { padding-left: 13px; gap: 4px; }
.stack { display: flex; flex-direction: column; padding-left: 4px; }
.stack button { height: 35px; display: flex; align-items: center; gap: 5px; white-space: nowrap; }
.stack .chevron { margin-left: -7px; }
.stack .far-chev { margin-left: 8px; }
.note-icon { position: relative; }
.note-icon b { position: absolute; left: 0; top: 4px; width: 16px; text-align: center; font-size: 12px; line-height: 16px; color: #fff; }
.show { padding-left: 11px; }
.pressed { width: 66px; height: 111px; padding-top: 57px; background: #c2c0be; color: #333; }
.tags { margin-left: auto; width: 176px; border-right: 2px solid #b8b6b4; }
.tags .stack { padding-left: 54px; }
.zoom-group { width: 88px; border-right: 2px solid #b8b6b4; align-items: center; }
.card-window .fold { margin-left: 0; width: 50px; }

.form { flex: 1; min-height: 0; display: flex; flex-direction: column; padding: 9px 14px 6px 9px; }
.names { display: grid; grid-template-columns: 50px 120px 1fr; width: 55%; grid-template-rows: 36px 36px 36px 40px; align-items: center; }
.names > :nth-child(2n) { grid-column: 2; }
.names > :nth-child(2n + 3) { grid-column: 3; }
.woman { width: 24px; height: 34px; margin: 5px 0 0 4px; align-self: start; }
.classic { width: 113px; height: 36px; flex: none; background: #f0f0f0; border: 2px solid; border-color: #fff #696969 #696969 #fff; box-shadow: inset -1px -1px #a0a0a0, inset 1px 1px #e3e3e3; color: #000; font-size: 16px; line-height: 22px; }
.sunk { background: #fff; border: 2px solid; border-color: #888 #fff #fff #888; box-shadow: inset 1px 1px #696969, inset -1px -1px #e3e3e3; height: 32px; width: 100%; }
.sunk.tall { height: 37px; }
.etched { width: 100%; height: 4px; margin: 4px 0 0; border: 0; border-top: 2px solid #a0a0a0; background: #fff; flex: none; }
.form > .etched { width: calc(100% - 5px); }
.details { display: grid; grid-template-columns: 1fr 1fr; height: 198px; flex: none; }
.address { display: grid; grid-template-columns: 46px 124px 1fr; padding-top: 19px; }
.house { width: 33px; height: 34px; margin-top: 7px; }
.addr-left .classic { margin-left: 4px; }
.kind { display: flex; align-items: center; justify-content: space-between; padding-right: 5px; margin-top: 11px; height: 33px; }
.addr-left .square { width: 36px; height: 33px; display: flex; align-items: center; justify-content: center; margin: 0; }
.tri-black { border: 6px solid transparent; border-top-color: #000; border-bottom: 0; }
.addr-right textarea { display: block; height: 109px; resize: none; }
.check { display: flex; align-items: center; gap: 5px; white-space: nowrap; margin-top: 20px; height: 20px; }
.check input { appearance: none; width: 19px; height: 19px; background: #fff; border: 2px solid; border-color: #888 #fff #fff #888; box-shadow: inset 1px 1px #696969; position: relative; }
.check input:checked::after { content: ""; position: absolute; left: 5px; top: 1px; width: 5px; height: 10px; border: solid #000; border-width: 0 2px 2px 0; transform: rotate(40deg); }
.web { padding: 17px 4px 0 0; }
.email { display: flex; gap: 5px; align-items: center; }
.email .classic { width: 36px; height: 38px; display: flex; align-items: center; justify-content: center; }
.email .classic svg { width: 20px; height: 20px; }
.flat { border: 1px solid #ababab; background: #fff; height: 33px; width: 100%; display: block; }
.web .etched { margin: 47px 0 9px; height: 4px; border-top-width: 1px; }
.notes { flex: 1; min-height: 0; border: 1px solid #828790; background: #fff; resize: none; }
.bottom { display: flex; align-items: center; padding-top: 8px; flex: none; }
.bottom .classic { height: 38px; }
.contacts { margin: 0 9px 0 11px; flex: 1; }
.cats { width: 285px; margin: 0 9px 0 8px; }
.private { margin: -4px 0 0; gap: 14px; }

/* edit dialog */
.dialog { position: absolute; z-index: 3; left: 676px; right: 416px; top: 116px; border: 1px solid #666; background: #f0f0f0; box-shadow: 0 5px 20px rgba(0, 0, 0, .4); }
.dialog header { height: 45px; background: #fff; display: flex; align-items: center; justify-content: space-between; padding: 0 12px 0 11px; }
.dialog h1 { font-size: 17px; font-weight: 400; }
.dialog header svg { stroke-width: 1.2; }
.dialog-body { display: grid; grid-template-columns: 375px 1fr; grid-template-rows: 256px auto; column-gap: 14px; padding: 11px 9px 0; }
.preview { margin-top: 12px; height: 226px; border: 1px solid #707070; background: linear-gradient(#fff, #eef4fa); }
.design { border: 0; margin: 0; padding: 0; min-width: 0; }
.legend { display: flex; align-items: center; gap: 14px; line-height: 20px; height: 20px; white-space: nowrap; }
.legend::after { content: ""; flex: 1; height: 2px; border-top: 1px solid #a0a0a0; background: #fff; }
.line { display: flex; align-items: center; }
.line > label, .line > .off { width: 97px; flex: none; white-space: nowrap; }
.off { color: #a0a0a0; text-shadow: 1px 1px #fff; }
.r35 { height: 35px; margin-top: 6px; }
.image-row { margin-top: 20px; }
.r33 { height: 33px; margin-top: 6px; }
.r30 { height: 30px; margin-top: 4px; }
.select { position: relative; flex: none; height: 30px; }
.w180 { width: 180px; }
.select select { appearance: none; width: 100%; height: 30px; background: #e1e1e1; border: 1px solid #adadad; padding: 0 3px; }
.select svg { position: absolute; right: 2px; top: 3px; color: #444; pointer-events: none; }
.select.disabled select { background: #ccc; border-color: #bfbfbf; color: #707070; opacity: 1; }
.select.disabled svg { color: #a0a0a0; }
.bg-label { margin-left: 13px; }
.win { width: 111px; height: 35px; background: #e1e1e1; border: 1px solid #adadad; flex: none; }
.win.icon { width: 30px; display: flex; align-items: center; justify-content: center; }
.win.icon svg { width: 16px; height: 16px; }
.line .icon { margin-left: auto; }
.win.change { width: 179px; background: #ccc; border-color: #bfbfbf; color: #838383; }
.pale { height: 33px; width: 154px; border: 1px solid #a3adba; box-shadow: inset 0 0 0 1px #cfe0f4; background: #f0f0f0; color: #777; padding: 0 4px 3px; }
.spin { width: 26px; height: 31px; display: flex; flex-direction: column; }
.spin button { flex: 1; border: 1px solid #ddd; display: flex; align-items: center; justify-content: center; }
.tri-up { border: 5px solid transparent; border-bottom-color: #666; border-top: 0; }
.tri-small { border: 5px solid transparent; border-top-color: #666; border-bottom: 0; }
.list { list-style: none; height: 334px; margin-top: 5px; border: 1px solid #828790; background: #fff; padding: 1px; }
.list li { height: 21px; line-height: 21px; padding-left: 2px; }
.list .sel { background: #0078d7; color: #fff; }
.row-buttons { display: flex; gap: 16px; margin-top: 12px; }
.format { display: flex; height: 33px; margin-top: 5px; align-items: center; color: #505050; }
.format button { position: relative; width: 34px; height: 33px; display: flex; align-items: center; justify-content: center; font-size: 21px; font-weight: 600; line-height: 24px; }
.format .i24 { height: 24px; }
.format .active { background: #c0dcf3; border: 1px solid #90c8f6; }
.format .shrink-a { font-size: 18px; padding: 4px 6px 0 0; }
.format .grow-a { padding: 3px 10px 0 0; }
.mark-up, .mark-down { position: absolute; right: 7px; top: 6px; border: 4px solid transparent; }
.mark-up { border-bottom-color: #3a76b4; border-top: 0; }
.mark-down { border-top-color: #3a76b4; border-bottom: 0; }
.format .b { font-weight: 700; }
.format .it { font-family: "Liberation Serif", serif; font-style: italic; font-weight: 700; font-size: 24px; }
.format .un { text-decoration: underline; text-decoration-thickness: 2px; text-underline-offset: 3px; font-size: 20px; }
.format .color-a { width: 24px; height: 24px; border-bottom: 6px solid #4a7eb5; margin-left: 6px; line-height: 18px; }
.sep { width: 1px; height: 22px; background: #c0c0c0; margin: 0 3px; }
.value { margin-top: 5px; }
.label-row { height: 35px; margin-top: 5px; }
.line.label-row > label { width: 51px; }
.label-row .pale { width: 170px; margin-right: 13px; }
.nolabel { width: 140px; }
.tint { font-family: "Liberation Serif", serif; font-weight: 700; font-size: 19px; line-height: 15px; color: #2a4a8c; }
.tint span { width: 16px; border-bottom: 4px solid #ff5a0a; }
.dialog > footer { display: flex; justify-content: flex-end; gap: 16px; padding: 20px 10px 12px; }
.ok { border: 2px solid #0078d7; }

.banner { position: absolute; z-index: 4; left: 377px; top: 641px; width: 1002px; height: 176px; background: #fff; color: #ed1c24; font-weight: 700; font-size: 60px; line-height: 90px; white-space: nowrap; }

/* taskbar */
.taskbar { height: 60px; flex: none; display: flex; align-items: center; background: #1a2636; color: #fff; font-size: 17px; line-height: 27px; }
.taskbar button { height: 60px; display: flex; align-items: center; justify-content: center; flex: none; text-align: center; }
.sys { width: 72px; }
.apps { display: flex; flex: 1; padding-left: 4px; }
.apps button { width: 75px; position: relative; padding-right: 2px; }
.app-icon { position: relative; }
.app-icon svg { width: 36px; height: 36px; }
.app-icon b { position: absolute; left: 0; top: 9px; width: 19px; text-align: center; font-size: 14px; line-height: 18px; }
.app-icon.onenote16 b { left: 1px; }
.app-icon.teams b { top: 7px; }
.app-icon.skype b { width: 32px; top: 6px; font-size: 24px; line-height: 22px; color: #00aff0; }
.teams em { position: absolute; left: 15px; top: 16px; width: 20px; text-align: center; font-style: normal; font-weight: 600; font-size: 13px; line-height: 20px; }
.apps .open::after, .apps .active::after { content: ""; position: absolute; left: 7px; right: 7px; bottom: 0; height: 3px; background: #76b9ed; }
.apps .active { background: linear-gradient(90deg, #46505e 68px, #36414f 68px); }
.apps .active::after { left: 0; right: 0; }
.tray { width: 48px; }
.taskbar .kb { padding-bottom: 30px; }
.taskbar .pen { width: 60px; }
.lang { width: 56px; }
.clock { width: 102px; }
.action { width: 62px; }
.action svg { width: 26px; height: 28px; }
.peek { width: 1px; height: 60px; background: #6c7683; margin: 0 7px 0 11px; }
</style>
